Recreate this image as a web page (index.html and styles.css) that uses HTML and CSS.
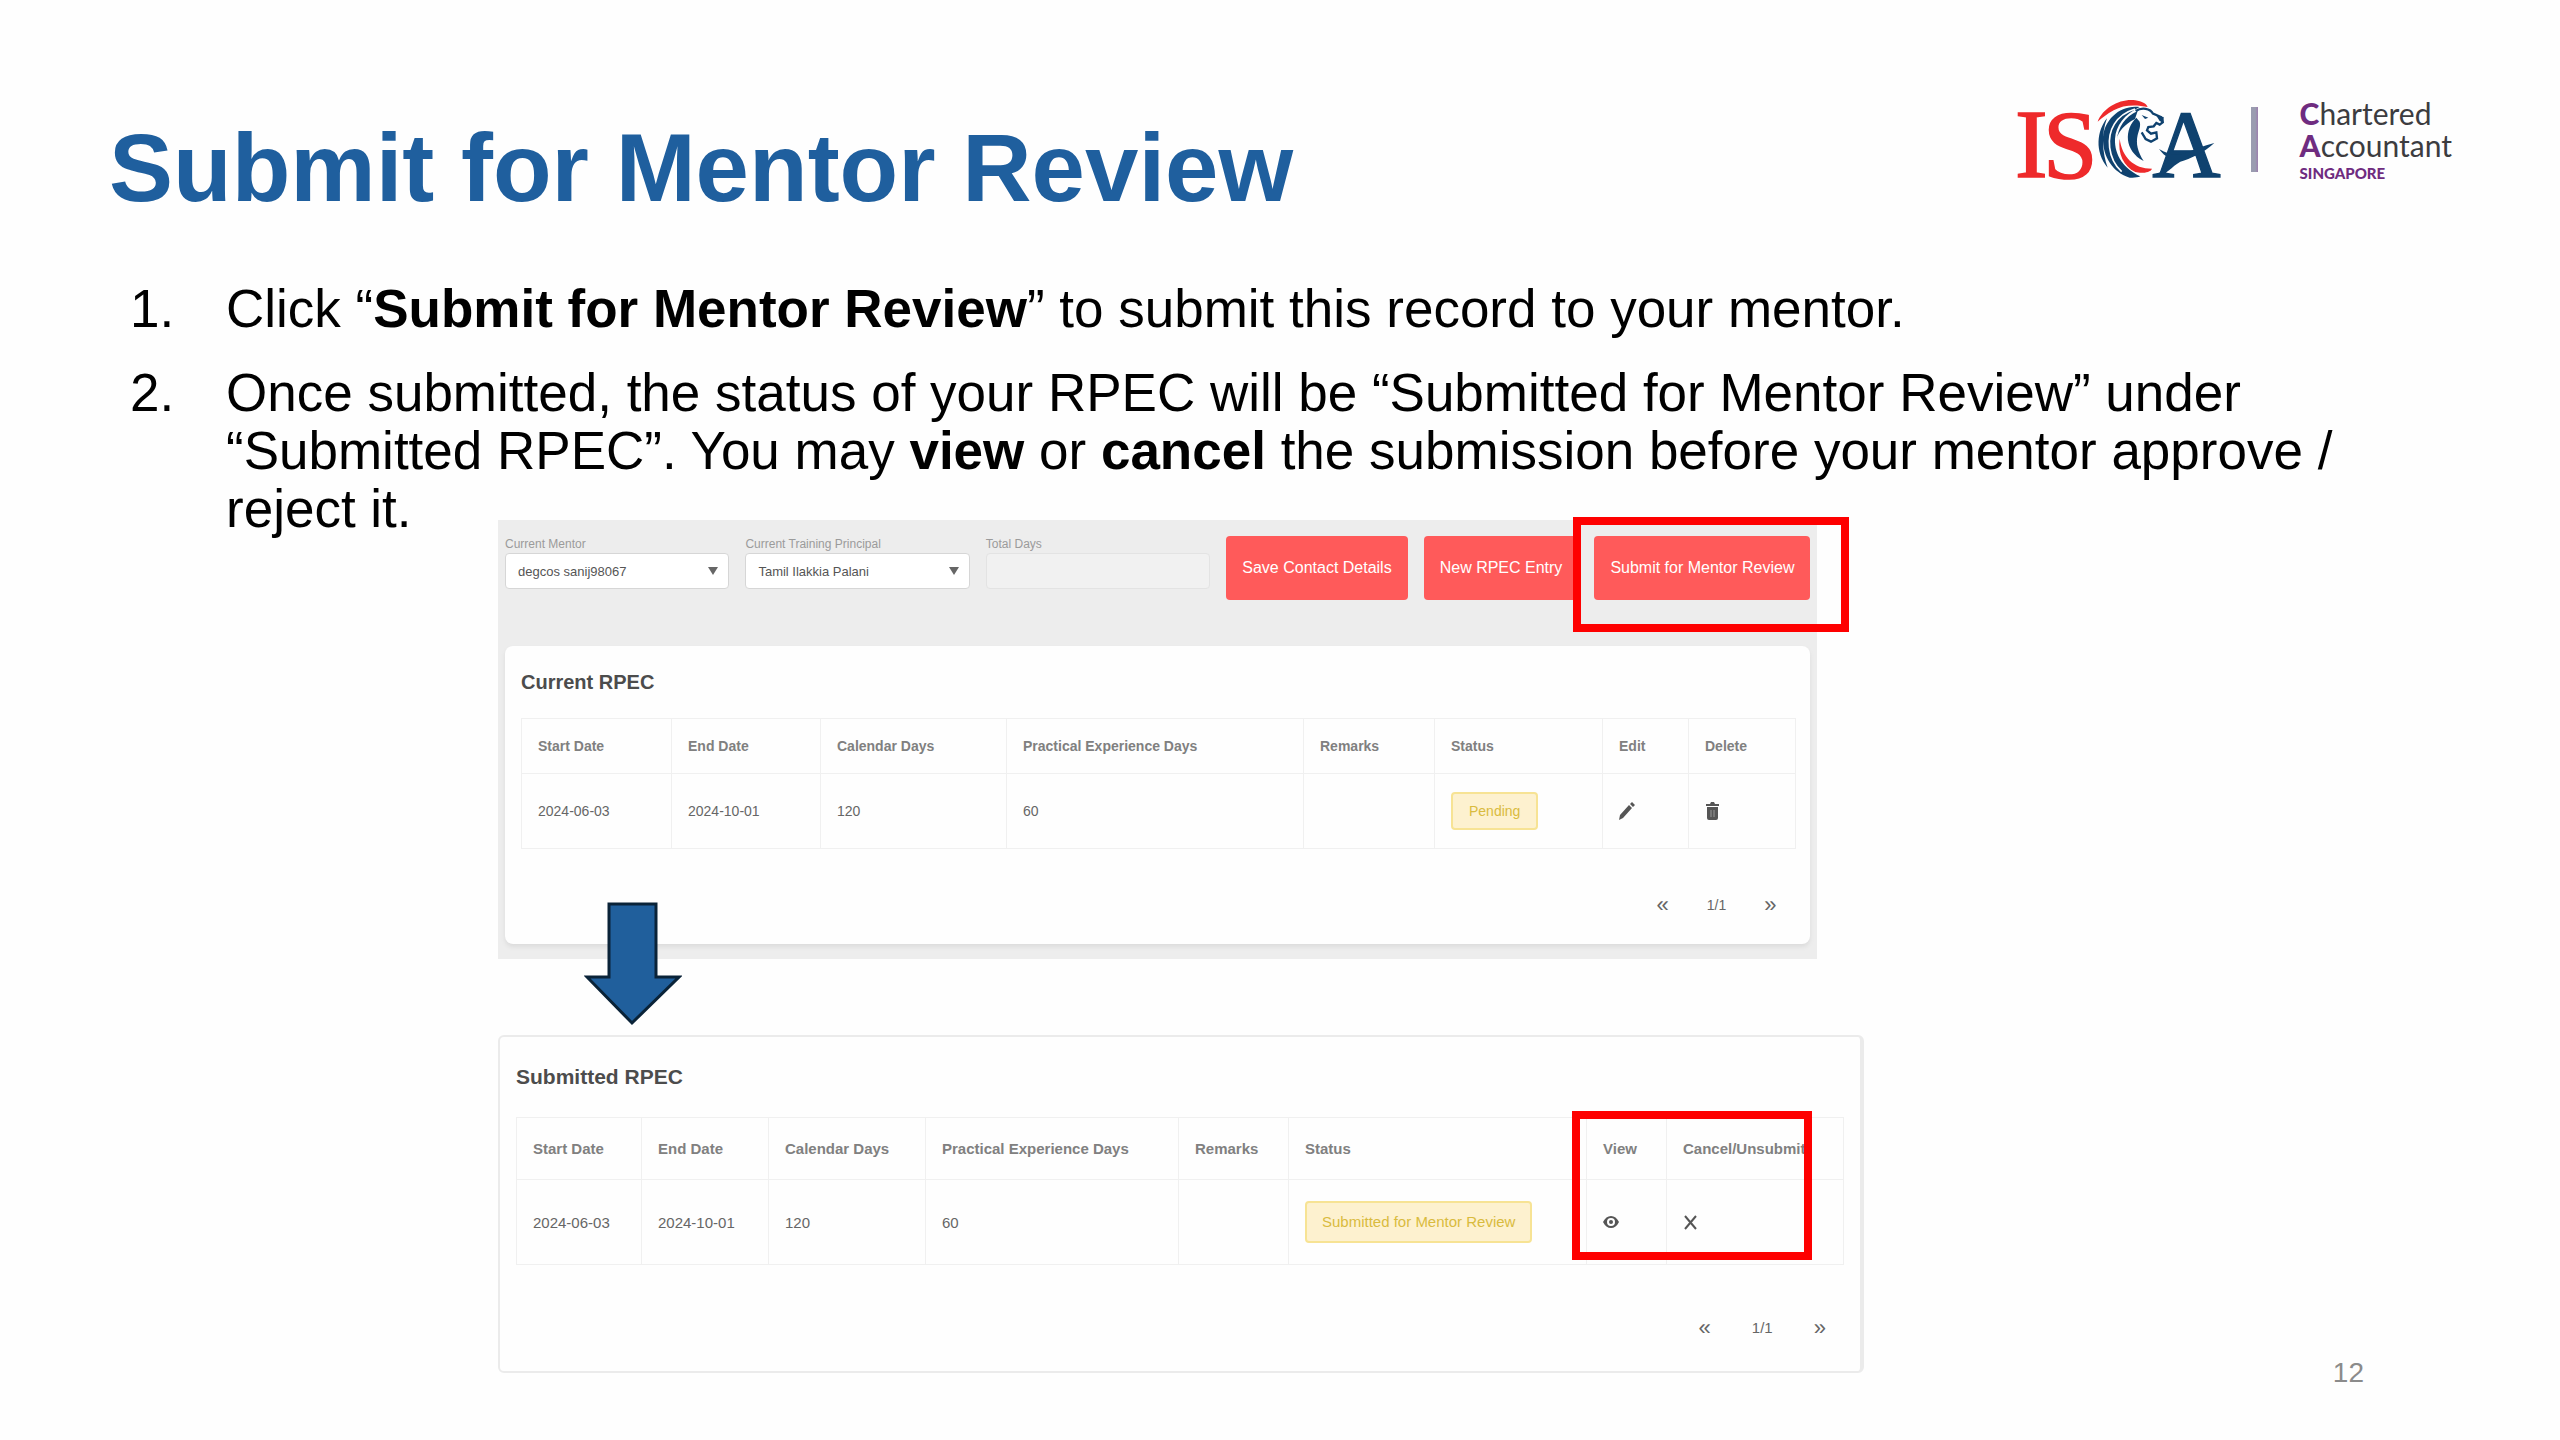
FILE: index.html
```
<!DOCTYPE html>
<html lang="en">

<head>
    <meta charset="UTF-8">
    <meta name="viewport" content="width=device-width, initial-scale=1.0">
    <title>Submit for Mentor Review</title>
    <link rel="stylesheet" href="styles.css">
</head>

<body>

    <header class="header">
        <h1 class="title">Submit for Mentor Review</h1>
        <div class="brand">
            <svg class="logo" viewBox="30 20 612 252" role="img" aria-label="ISCA">
                <g class="logo-text">
                    <text class="red" x="24" y="260" font-size="294">I</text>
                    <text class="red" x="108" y="262" font-size="294">S</text>
                    <text class="navy" x="436" y="260" font-size="284">A</text>
                </g>
                <!-- mane -->
                <path class="red" d="M272 94C288 52 340 24 385 30C405 33 418 40 422 50C390 43 350 42 320 60C300 71 285 83 272 94z" />
                <path class="navy" d="M300 84C270 120 262 185 302 232C286 190 282 130 300 84z" />
                <path class="navy" d="M398 50C340 42 292 88 288 140C286 200 318 246 368 262C380 263 392 262 400 258C352 236 322 196 324 146C326 106 352 72 398 50z" />
                <path class="navy" d="M392 62C352 80 334 112 330 146C332 126 352 102 384 86z" />
                <path class="red" d="M338 145C345 200 380 235 435 235C430 248 400 250 385 245C350 228 332 190 338 145z" />
                <path class="navy" d="M388 82C352 116 350 180 410 212C392 185 386 160 392 134C396 118 402 108 398 94z" />
                <path class="gap" d="M384 56C326 74 302 120 308 172C312 206 326 228 344 244" />
                <!-- face -->
                <path class="face" d="M386 62C404 50 430 54 438 70L462 80L467 96L458 103L448 98L440 108L424 110L420 120L432 130L448 126L450 144L432 154L416 146L404 126" />
                <path class="navy" d="M404 74L424 82L414 86zM448 76L470 80L470 98L458 92z" />
                <!-- swoosh through the A -->
                <path class="navy" d="M456 176C484 192 505 196 530 190C560 178 590 166 622 158C590 188 550 205 520 214C494 228 480 254 440 261C466 244 480 220 488 204C476 198 464 188 456 176z" />
            </svg>
            <span class="divider"></span>
            <div class="tagline">
                <span class="tagline-name"><b>C</b>hartered</span>
                <span class="tagline-name"><b>A</b>ccountant</span>
                <span class="tagline-place">SINGAPORE</span>
            </div>
        </div>
    </header>

    <ol class="steps">
        <li><span class="step-number">1.</span><p>Click “<b>Submit for Mentor Review</b>” to submit this record to your mentor.</p></li>
        <li><span class="step-number">2.</span><p>Once submitted, the status of your RPEC will be “Submitted for Mentor Review” under “Submitted RPEC”. You may <b>view</b> or <b>cancel</b> the submission before your mentor approve / reject it.</p></li>
    </ol>

    <main class="stage">
        <div class="shots">
            <section class="panel current">
                <form class="toolbar">
                    <div class="field">
                        <label for="mentor">Current Mentor</label>
                        <div class="select-box"><select id="mentor"><option>degcos sanij98067</option></select></div>
                    </div>
                    <div class="field">
                        <label for="principal">Current Training Principal</label>
                        <div class="select-box"><select id="principal"><option>Tamil Ilakkia Palani</option></select></div>
                    </div>
                    <div class="field">
                        <label for="days">Total Days</label>
                        <input id="days" type="text" disabled>
                    </div>
                    <button type="button" class="btn">Save Contact Details</button>
                    <button type="button" class="btn">New RPEC Entry</button>
                    <button type="button" class="btn">Submit for Mentor Review</button>
                </form>

                <div class="card">
                    <h2>Current RPEC</h2>
                    <table>
                        <thead>
                            <tr>
                                <th>Start Date</th>
                                <th>End Date</th>
                                <th>Calendar Days</th>
                                <th>Practical Experience Days</th>
                                <th>Remarks</th>
                                <th>Status</th>
                                <th>Edit</th>
                                <th>Delete</th>
                            </tr>
                        </thead>
                        <tbody>
                            <tr>
                                <td>2024-06-03</td>
                                <td>2024-10-01</td>
                                <td>120</td>
                                <td>60</td>
                                <td></td>
                                <td><span class="badge">Pending</span></td>
                                <td>
                                    <button type="button" class="icon-btn" aria-label="Edit">
                                        <svg viewBox="0 0 16 18"><path d="M0 18L1 13L10 3L13 6L4 16zM11 2L13 0L16 3L14 5z" /></svg>
                                    </button>
                                </td>
                                <td>
                                    <button type="button" class="icon-btn" aria-label="Delete">
                                        <svg viewBox="0 0 16 18"><path d="M1 2H5L6 0H9L10 2H14V4H1zM2 5H13V16Q13 18 11 18H4Q2 18 2 16z" /><path class="slats" d="M6 8V15M9 8V15" /></svg>
                                    </button>
                                </td>
                            </tr>
                        </tbody>
                    </table>
                    <nav class="pager">
                        <button type="button" aria-label="Previous page">«</button>
                        <span>1/1</span>
                        <button type="button" aria-label="Next page">»</button>
                    </nav>
                </div>
                <div class="highlight highlight-submit"></div>
                <svg class="arrow" viewBox="0 0 98 124"><path d="M25 2H72V75H95L48 121L3 75H25z" /></svg>
            </section>

            <section class="panel submitted">
                <h2>Submitted RPEC</h2>
                <table>
                    <thead>
                        <tr>
                            <th>Start Date</th>
                            <th>End Date</th>
                            <th>Calendar Days</th>
                            <th>Practical Experience Days</th>
                            <th>Remarks</th>
                            <th>Status</th>
                            <th>View</th>
                            <th>Cancel/Unsubmit</th>
                        </tr>
                    </thead>
                    <tbody>
                        <tr>
                            <td>2024-06-03</td>
                            <td>2024-10-01</td>
                            <td>120</td>
                            <td>60</td>
                            <td></td>
                            <td><span class="badge">Submitted for Mentor Review</span></td>
                            <td>
                                <button type="button" class="icon-btn" aria-label="View">
                                    <svg viewBox="0 0 16 18"><path fill-rule="evenodd" d="M0 9Q3 3 8 3T16 9Q13 15 8 15T0 9zM8 5A4 4 0 1 0 8 13A4 4 0 1 0 8 5z" /><circle cx="8" cy="9" r="2" /></svg>
                                </button>
                            </td>
                            <td>
                                <button type="button" class="icon-btn" aria-label="Cancel">
                                    <svg viewBox="0 0 16 18"><path class="cross" d="M2 3L13 16M13 3L2 16" /></svg>
                                </button>
                            </td>
                        </tr>
                    </tbody>
                </table>
                <nav class="pager">
                    <button type="button" aria-label="Previous page">«</button>
                    <span>1/1</span>
                    <button type="button" aria-label="Next page">»</button>
                </nav>
                <div class="highlight highlight-cancel"></div>
            </section>
        </div>
        <span class="page-number">12</span>
    </main>

</body>

</html>
```
FILE: styles.css
```
* {
    box-sizing: border-box;
    margin: 0;
    padding: 0;
}

body {
    background-color: #fefefe;
    color: #000;
    font-family: "Liberation Sans", Arial, sans-serif;
}

button,
select,
input {
    font-family: inherit;
}

/* header */
.header {
    display: flex;
    justify-content: space-between;
    align-items: flex-start;
    padding: 97px 108px 0 109px;
}

.title {
    margin-top: 16px;
    font-size: 96px;
    line-height: 110px;
    color: #1f5f9e;
}

.brand {
    display: flex;
}

.logo {
    width: 204px;
    height: 84px;
    overflow: visible;
}

.logo-text {
    font-family: "Liberation Serif", serif;
    font-weight: normal;
}

.logo .red {
    fill: #ee2a2b;
}

.logo .navy {
    fill: #0f426f;
}

.logo-text .red {
    stroke: #ee2a2b;
    stroke-width: 5;
}

.logo-text .navy {
    stroke: #0f426f;
    stroke-width: 4;
}

.logo .gap {
    fill: none;
    stroke: #fefefe;
    stroke-width: 5;
}

.logo .face {
    fill: none;
    stroke: #0f426f;
    stroke-width: 7;
}

.divider {
    width: 7px;
    height: 65px;
    margin: 10px 42px 0 30px;
    background: linear-gradient(90deg, #9a9cb0 60%, #9d7fae);
}

.tagline {
    display: flex;
    flex-direction: column;
    font-family: Lato, sans-serif;
    color: #3c3c40;
}

.tagline-name {
    font-size: 30px;
    line-height: 32px;
}

.tagline b,
.tagline-place {
    color: #6f2c80;
    font-weight: 900;
}

.tagline-place {
    font-size: 15px;
    line-height: 24px;
}

/* numbered steps */
.steps {
    display: flex;
    flex-direction: column;
    gap: 26px;
    padding: 57px 190px 0 130px;
    list-style: none;
    font-size: 53px;
    line-height: 58px;
}

.steps li {
    display: flex;
}

.step-number {
    flex: 0 0 96px;
}

/* panels */
.stage {
    display: flex;
    justify-content: space-between;
    align-items: flex-end;
    margin-top: -18px;
    padding: 0 196px 48px 498px;
}

.shots {
    display: flex;
    flex-direction: column;
    gap: 76px;
    width: 73.2%;
}

.panel {
    position: relative;
}

.current {
    width: 96.6%;
    padding: 16px 7px 15px;
    background-color: #ededed;
    font-size: 14px;
}

.submitted {
    padding: 28px 16px 34px;
    border: 2px solid #ebebeb;
    border-right-width: 4px;
    border-radius: 6px;
    font-size: 15px;
}

.toolbar {
    display: flex;
    gap: 16px;
    margin-bottom: 46px;
}

.field {
    display: flex;
    flex: 1;
    flex-direction: column;
}

.field label {
    font-size: 12px;
    line-height: 17px;
    white-space: nowrap;
    color: #9b9b9b;
}

.select-box {
    position: relative;
}

.select-box::after {
    content: "";
    position: absolute;
    top: 14px;
    right: 11px;
    border: 5px solid transparent;
    border-top: 8px solid #666;
    border-bottom: 0;
    pointer-events: none;
}

.field select,
.field input {
    display: block;
    width: 100%;
    height: 36px;
    padding: 0 12px;
    border: 1px solid #d6d6d6;
    border-radius: 4px;
    background-color: #fff;
    font-size: 13px;
    color: #555;
    appearance: none;
}

.field input {
    border-color: #e3e3e3;
    background-color: #f1f1f1;
}

.btn {
    height: 64px;
    padding: 0 16px;
    border: 0;
    border-radius: 4px;
    background-color: #ff5a5a;
    color: #fff;
    font-size: 16px;
    white-space: nowrap;
}

.card {
    padding: 24px 16px 31px;
    border-radius: 8px;
    background-color: #fefefe;
    box-shadow: 0 3px 4px #dcdcdc;
}

h2 {
    font-size: 20px;
    line-height: 24px;
    margin-bottom: 24px;
    color: #4c4c4c;
}

.submitted h2 {
    font-size: 21px;
    margin-bottom: 28px;
}

/* tables */
table {
    width: 100%;
    border-collapse: collapse;
    table-layout: fixed;
}

th,
td {
    height: 75px;
    padding: 0 16px;
    border: 1px solid #f0f0f0;
    text-align: left;
    white-space: nowrap;
    color: #666;
}

th {
    height: 55px;
    color: #808080;
}

.submitted td {
    height: 85px;
}

.submitted th {
    height: 62px;
}

.current th:nth-child(1) { width: 150px; }
.current th:nth-child(2) { width: 149px; }
.current th:nth-child(3) { width: 186px; }
.current th:nth-child(4) { width: 297px; }
.current th:nth-child(5) { width: 131px; }
.current th:nth-child(6) { width: 168px; }
.current th:nth-child(7) { width: 86px; }
.current th:nth-child(8) { width: 107px; }

.submitted th:nth-child(1) { width: 125px; }
.submitted th:nth-child(2) { width: 127px; }
.submitted th:nth-child(3) { width: 157px; }
.submitted th:nth-child(4) { width: 253px; }
.submitted th:nth-child(5) { width: 110px; }
.submitted th:nth-child(6) { width: 298px; }
.submitted th:nth-child(7) { width: 80px; }
.submitted th:nth-child(8) { width: 177px; }

.badge {
    display: inline-block;
    padding: 0 16px;
    border: 2px solid #f7e394;
    border-radius: 4px;
    background-color: #fdf1cf;
    line-height: 34px;
    color: #d9bb3e;
}

.submitted .badge {
    padding: 0 15px;
    line-height: 38px;
}

.icon-btn {
    display: block;
    border: 0;
    background: none;
}

.icon-btn svg {
    display: block;
    width: 16px;
    height: 18px;
    fill: #555;
}

.icon-btn .slats {
    stroke: #999;
}

.icon-btn .cross {
    stroke: #555;
    stroke-width: 2;
}

.pager {
    display: flex;
    justify-content: flex-end;
    gap: 38px;
    margin-top: 48px;
    padding-right: 18px;
    line-height: 16px;
    color: #666;
}

.pager button {
    border: 0;
    background: none;
    font-size: 22px;
    line-height: 16px;
    color: #666;
}

.submitted .pager {
    gap: 41px;
    margin-top: 54px;
    line-height: 18px;
}

/* marks drawn over the panels */
.highlight {
    position: absolute;
    border: 8px solid #fe0000;
}

.highlight-submit {
    top: -3px;
    right: -32px;
    width: 276px;
    height: 115px;
}

.highlight-cancel {
    top: 74px;
    right: 48px;
    width: 240px;
    height: 149px;
}

.arrow {
    position: absolute;
    left: 86px;
    bottom: -67px;
    width: 98px;
    height: 124px;
    fill: #205f9c;
    stroke: #0a2338;
    stroke-width: 3;
}

.page-number {
    margin-bottom: -18px;
    font-size: 28px;
    line-height: 36px;
    color: #8b8b8b;
}
```
